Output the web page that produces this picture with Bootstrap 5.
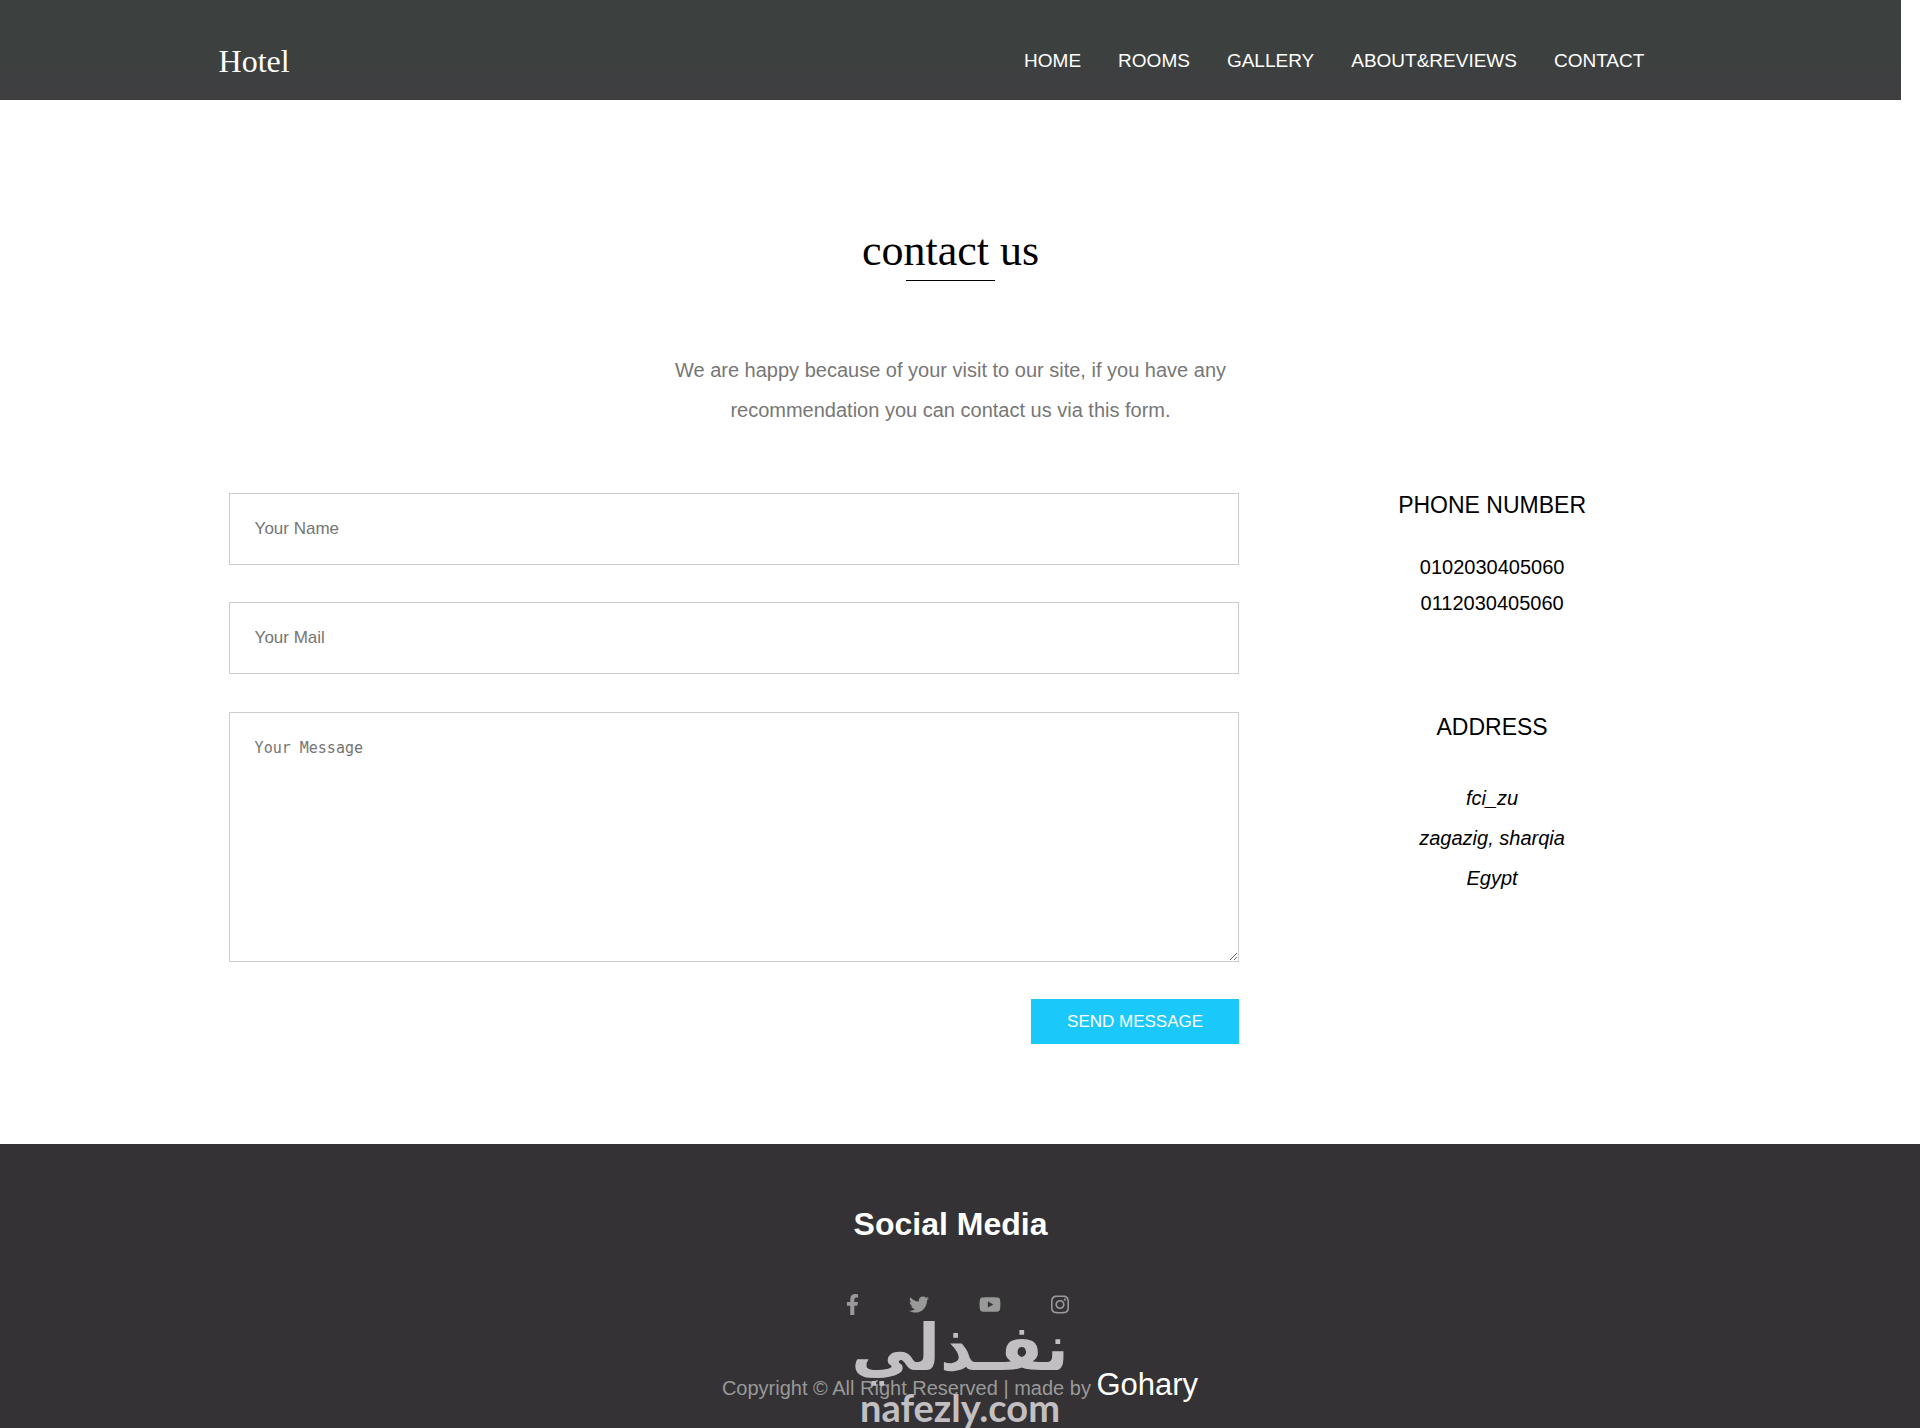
<!DOCTYPE html>
<html lang="en">
<head>
<meta charset="utf-8">
<meta name="viewport" content="width=device-width, initial-scale=1">
<title>Hotel - Contact</title>
<link href="https://cdn.jsdelivr.net/npm/bootstrap@5.3.0/dist/css/bootstrap.min.css" rel="stylesheet">
<script defer src="https://cdn.jsdelivr.net/npm/bootstrap@5.3.0/dist/js/bootstrap.bundle.min.js"></script>
<style>
body { font-family: "Liberation Sans", Arial, sans-serif; font-size: 20px; color: #000; background: #fefefe; }
.page-gutter { padding-right: 19px; }
.shell { width: 77%; margin: 0 auto; }
.site-header { background: linear-gradient(#3c413f 50%, #3f3e41); height: 100px; padding-top: 21px; }
.brand-name { font-family: "Liberation Serif", "Times New Roman", serif; font-size: 32px; line-height: 80px; color: #fff; text-decoration: none; }
.site-nav { gap: 37px; padding-right: 38px; }
.site-nav .nav-link { color: #fff; font-size: 19px; padding: 0; line-height: 80px; }
.contact-area { padding: 122px 0 100px; }
.page-title { font-family: "Liberation Serif", "Times New Roman", serif; font-size: 44px; line-height: 58px; margin: 0; }
.page-title::after { content: ""; display: block; width: 50%; height: 1px; margin: 0 auto; background: #000; }
.intro { max-width: 600px; line-height: 40px; color: #777; margin: 69px auto 63px; }
.form-side { flex: 0 0 70.4%; padding: 0 10px; }
.info-side { flex: 0 0 26%; }
.field { border: 1px solid #ccc; border-radius: 0; padding: 25px; font-size: 17px; line-height: 20px; min-height: 72px; color: #333; background: transparent; margin-bottom: 37px; }
.field::placeholder { color: #757575; }
.field-message { display: block; height: 250px; margin-top: 38px; font-family: "DejaVu Sans Mono", monospace; font-size: 15px; resize: vertical; }
.send-btn { background: #1bc8fa; color: #fff; border: 0; border-radius: 0; font-size: 17px; line-height: 21px; padding: 12px 36px; }
.info-title { font-size: 23px; line-height: 24px; margin: 0; }
.phone-list { line-height: 36px; margin: 32px 0 94px; }
.address-lines { line-height: 40px; font-style: italic; margin: 39px 0 0; }
.site-footer { background: #343234; color: #999; padding-top: 60px; height: 284px; }
.social-title { font-size: 32px; line-height: 40px; font-weight: 700; color: #fff; margin: 0; }
.social-links { gap: 50px; margin-top: 50px; padding-left: 13px; }
.social-links a { color: #999; line-height: 1; }
.social-links svg { display: block; height: 21px; fill: currentColor; }
.copyright-line { line-height: 44px; margin: 48px 0 0; padding-left: 19px; }
.author-link { color: #fff; font-size: 31px; text-decoration: none; }
.watermark { left: 50%; bottom: 0; transform: translateX(-50%); color: #c2bfc3; pointer-events: none; text-align: center; }
.watermark-ar { font-family: "DejaVu Sans", sans-serif; font-weight: 700; font-size: 64px; line-height: 76px; }
.watermark-en { font-family: Lato, sans-serif; font-weight: 700; font-size: 38px; line-height: 42px; }
</style>
</head>
<body>
<div class="page-gutter bg-white">
  <header class="site-header">
    <div class="shell d-flex justify-content-between">
      <a class="brand-name" href="#">Hotel</a>
      <nav class="nav site-nav" aria-label="Main">
        <a class="nav-link" href="#">HOME</a>
        <a class="nav-link" href="#">ROOMS</a>
        <a class="nav-link" href="#">GALLERY</a>
        <a class="nav-link" href="#">ABOUT&amp;REVIEWS</a>
        <a class="nav-link" href="#">CONTACT</a>
      </nav>
    </div>
  </header>
  <main class="contact-area shell">
    <div class="d-flex justify-content-center"><h1 class="page-title">contact us</h1></div>
    <p class="intro text-center">We are happy because of your visit to our site, if you have any recommendation you can contact us via this form.</p>
    <div class="d-flex justify-content-between">
      <form class="form-side">
        <input class="form-control field" type="text" placeholder="Your Name" aria-label="Your Name">
        <input class="form-control field" type="email" placeholder="Your Mail" aria-label="Your Mail">
        <textarea class="form-control field field-message" placeholder="Your Message" aria-label="Your Message"></textarea>
        <div class="d-flex justify-content-end"><button class="btn send-btn" type="submit">SEND MESSAGE</button></div>
      </form>
      <aside class="info-side text-center">
        <h2 class="info-title">PHONE NUMBER</h2>
        <p class="phone-list">0102030405060<br>0112030405060</p>
        <h2 class="info-title">ADDRESS</h2>
        <address class="address-lines">fci_zu<br>zagazig, sharqia<br>Egypt</address>
      </aside>
    </div>
  </main>
</div>
<footer class="site-footer position-relative text-center">
  <div class="page-gutter">
    <h2 class="social-title">Social Media</h2>
    <div class="social-links d-flex justify-content-center align-items-center">
      <a href="#" aria-label="Facebook"><svg width="13" viewBox="0 0 320 512"><path d="M279.14 288l14.22-92.66h-88.91v-60.13c0-25.35 12.42-50.06 52.24-50.06h40.42V6.26S260.43 0 225.36 0c-73.22 0-121.08 44.38-121.08 124.72v70.62H22.89V288h81.39v224h100.17V288z"/></svg></a>
      <a href="#" aria-label="Twitter"><svg width="20" viewBox="0 0 512 512"><path d="M459.37 151.716c.325 4.548.325 9.097.325 13.645 0 138.72-105.583 298.558-298.558 298.558-59.452 0-114.68-17.219-161.137-47.106 8.447.974 16.568 1.299 25.34 1.299 49.055 0 94.213-16.568 130.274-44.832-46.132-.975-84.792-31.188-98.112-72.772 6.498.974 12.995 1.624 19.818 1.624 9.421 0 18.843-1.3 27.614-3.573-48.081-9.747-84.143-51.98-84.143-102.985v-1.299c13.969 7.797 30.214 12.67 47.431 13.319-28.264-18.843-46.781-51.005-46.781-87.391 0-19.492 5.197-37.36 14.294-52.954 51.655 63.675 129.3 105.258 216.365 109.807-1.624-7.797-2.599-15.918-2.599-24.04 0-57.828 46.782-104.934 104.934-104.934 30.213 0 57.502 12.67 76.67 33.137 23.715-4.548 46.456-13.32 66.599-25.34-7.798 24.366-24.366 44.833-46.132 57.827 21.117-2.273 41.584-8.122 60.426-16.243-14.292 20.791-32.161 39.308-52.628 54.253z"/></svg></a>
      <a href="#" aria-label="YouTube"><svg width="22" viewBox="0 0 576 512"><path d="M549.655 124.083c-6.281-23.65-24.787-42.276-48.284-48.597C458.781 64 288 64 288 64S117.22 64 74.629 75.486c-23.497 6.322-42.003 24.947-48.284 48.597-11.412 42.867-11.412 132.305-11.412 132.305s0 89.438 11.412 132.305c6.281 23.65 24.787 41.5 48.284 47.821C117.22 448 288 448 288 448s170.78 0 213.371-11.486c23.497-6.321 42.003-24.171 48.284-47.821 11.412-42.867 11.412-132.305 11.412-132.305s0-89.438-11.412-132.305zm-317.51 213.508V175.185l142.739 81.205-142.739 81.201z"/></svg></a>
      <a href="#" aria-label="Instagram"><svg width="18" viewBox="0 0 448 512"><path d="M224.1 141c-63.6 0-114.9 51.3-114.9 114.9s51.3 114.9 114.9 114.9S339 319.5 339 255.9 287.7 141 224.1 141zm0 189.6c-41.1 0-74.7-33.5-74.7-74.7s33.5-74.7 74.7-74.7 74.7 33.5 74.7 74.7-33.6 74.7-74.7 74.7zm146.4-194.3c0 14.9-12 26.8-26.8 26.8-14.9 0-26.8-12-26.8-26.8s12-26.8 26.8-26.8 26.8 12 26.8 26.8zm76.1 27.2c-1.7-35.9-9.9-67.7-36.2-93.9-26.2-26.2-58-34.4-93.9-36.2-37-2.1-147.9-2.1-184.9 0-35.8 1.7-67.6 9.9-93.9 36.1s-34.4 58-36.2 93.9c-2.1 37-2.1 147.9 0 184.9 1.7 35.9 9.9 67.7 36.2 93.9s58 34.4 93.9 36.2c37 2.1 147.9 2.1 184.9 0 35.9-1.7 67.7-9.9 93.9-36.2 26.2-26.2 34.4-58 36.2-93.9 2.1-37 2.1-147.8 0-184.8zM398.8 388c-7.8 19.6-22.9 34.7-42.6 42.6-29.5 11.7-99.5 9-132.1 9s-102.7 2.6-132.1-9c-19.6-7.8-34.7-22.9-42.6-42.6-11.7-29.5-9-99.5-9-132.1s-2.6-102.7 9-132.1c7.8-19.6 22.9-34.7 42.6-42.6 29.5-11.7 99.5-9 132.1-9s102.7-2.6 132.1 9c19.6 7.8 34.7 22.9 42.6 42.6 11.7 29.5 9 99.5 9 132.1s2.7 102.7-9 132.1z"/></svg></a>
    </div>
    <p class="copyright-line">Copyright © All Right Reserved | made by <a class="author-link" href="#">Gohary</a></p>
  </div>
  <div class="watermark position-absolute">
    <div class="watermark-ar" lang="ar" dir="rtl">نفـذلي</div>
    <div class="watermark-en">nafezly.com</div>
  </div>
</footer>
</body>
</html>
